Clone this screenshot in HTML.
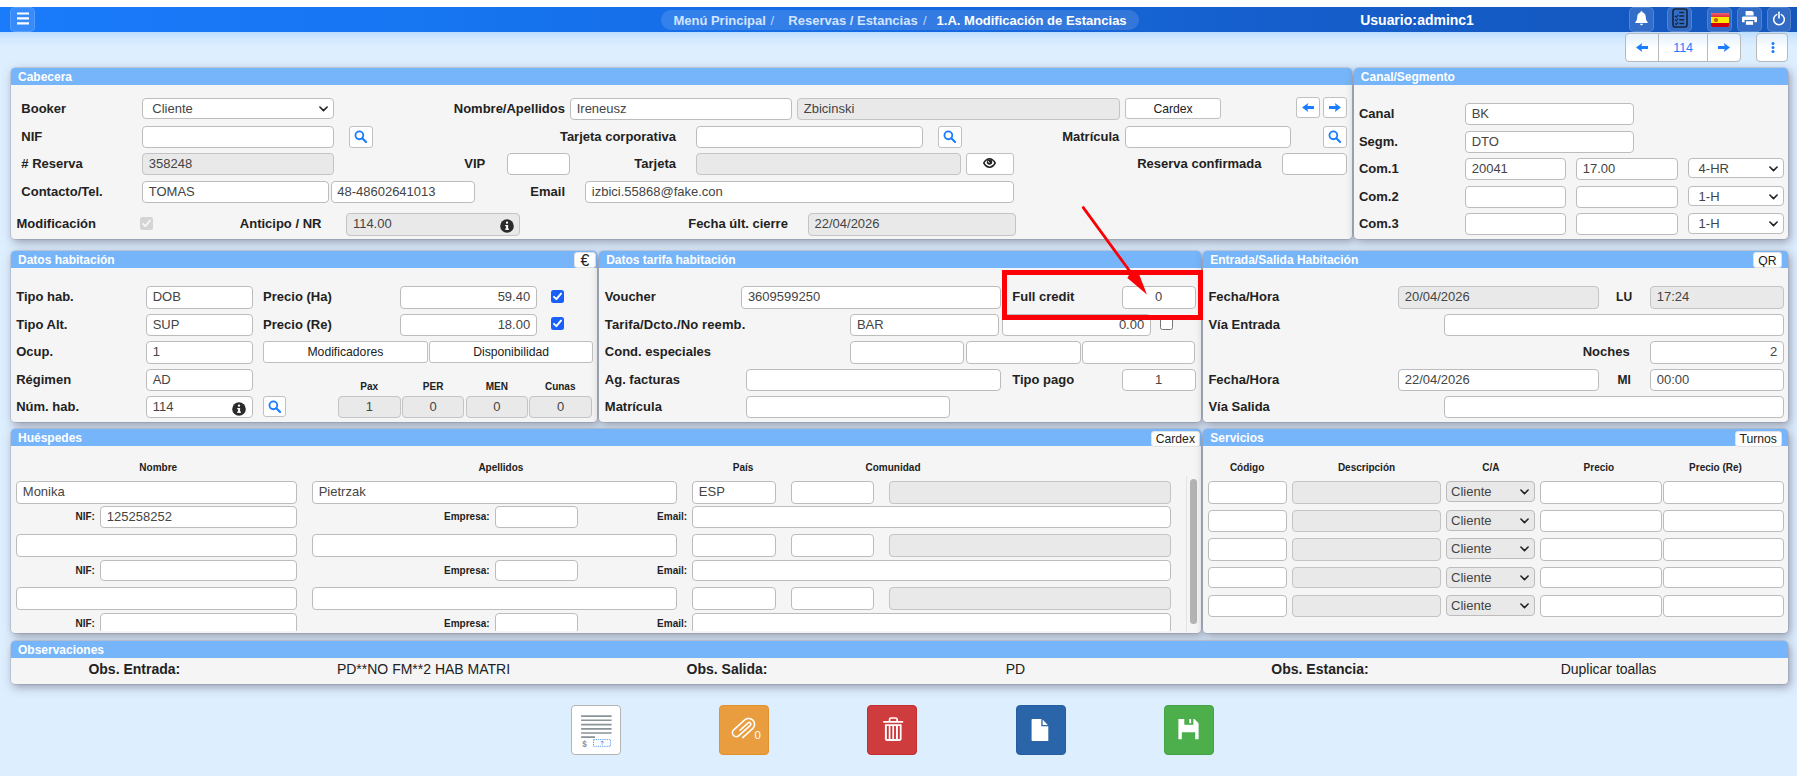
<!DOCTYPE html>
<html><head><meta charset="utf-8"><title>1.A. Modificación de Estancias</title>
<style>
html,body{margin:0;padding:0;}
body{width:1797px;height:776px;overflow:hidden;position:relative;background:#ddeeff;font-family:"Liberation Sans",sans-serif;font-size:13px;color:#222;}
div{position:absolute;box-sizing:border-box;}
.a{position:absolute;}
.p{background:#f5f5f5;border-radius:4px;box-shadow:0 0 0 0.5px rgba(90,90,120,.3),2px 3px 10px rgba(90,85,100,.56);}
.ph{left:0;top:0;right:0;background:#76b5f9;border-radius:4px 4px 0 0;color:#fff;font-weight:bold;font-size:12px;padding-left:7px;white-space:nowrap;overflow:hidden;}
.i{background:#fff;border:1px solid #bcbcbc;border-radius:4px;padding:0 5.5px;font-size:13px;color:#444;white-space:nowrap;overflow:hidden;}
.i.d{background:#e9e9e9;border-color:#c4c4c4;}
.i.g{background:#e9e9e9;}
.s .chev{position:absolute;right:4.5px;top:50%;margin-top:-2.6px;}
.b{background:#fff;border:1px solid #c0c0c0;border-radius:3px;font-size:12.2px;color:#222;text-align:center;white-space:nowrap;overflow:hidden;}
.l{white-space:nowrap;color:#222;}
.tb{border-radius:5px;background:rgba(255,255,255,.13);box-shadow:inset 0 0 0 1px rgba(255,255,255,.16);}
</style></head><body>

<div style="left:0;top:0;width:1797px;height:7px;background:#fff;"></div>
<div style="left:0;top:32px;width:1797px;height:15px;background:linear-gradient(#bbddff,#d3e9ff 50%,#ddeeff);"></div>
<div style="left:0;top:6.8px;width:1797px;height:25.2px;background:linear-gradient(90deg,#1a7bfb 0%,#1675f1 24%,#1569e0 50%,#155dc9 75%,#1456bc 100%);"></div>
<div class="tb" style="left:10px;top:7.3px;width:24.8px;height:24.3px;"><svg width="12" height="13" viewBox="0 0 12 13" style="position:absolute;left:6.6px;top:4.4px"><path d="M0 1.5H12M0 6.4H12M0 11.3H12" stroke="#fff" stroke-width="2.2"/></svg></div>
<div class="" style="left:661px;top:9.5px;width:478px;height:20.5px;border-radius:10.5px;background:rgba(255,255,255,.13);"></div>
<div class="l" style="top:11px;height:20px;line-height:20px;font-size:13px;font-weight:bold;color:#d3e4ff;left:673.4px;">Menú Principal</div>
<div class="l" style="top:11px;height:20px;line-height:20px;font-size:13px;font-weight:normal;color:#c0d6fa;left:770.5px;">/</div>
<div class="l" style="top:11px;height:20px;line-height:20px;font-size:13px;font-weight:bold;color:#d3e4ff;left:788.3px;">Reservas / Estancias</div>
<div class="l" style="top:11px;height:20px;line-height:20px;font-size:13px;font-weight:normal;color:#c0d6fa;left:923px;">/</div>
<div class="l" style="top:11px;height:20px;line-height:20px;font-size:13px;font-weight:bold;color:#fff;left:936.6px;">1.A. Modificación de Estancias</div>
<div class="l" style="top:10px;height:20px;line-height:20px;font-size:14px;font-weight:bold;color:#fff;left:1360.3px;word-spacing:-3.4px;letter-spacing:-0.04px;">Usuario: adminc1</div>
<div class="tb" style="left:1629.3px;top:7.3px;width:24.4px;height:24.3px;"><svg width="13" height="15" viewBox="0 0 13 15" style="position:absolute;left:5.7px;top:3.4px"><path d="M6.5 0.3 C7.2 0.3 7.6 0.8 7.6 1.4 C9.7 1.9 10.8 3.7 10.8 6 C10.8 8.6 11.4 9.9 12.6 10.9 C12.9 11.2 12.7 11.9 12.2 11.9 H0.8 C0.3 11.9 0.1 11.2 0.4 10.9 C1.6 9.9 2.2 8.6 2.2 6 C2.2 3.7 3.3 1.9 5.4 1.4 C5.4 0.8 5.8 0.3 6.5 0.3 Z" fill="#fff"/><path d="M5 12.8 H8 C8 13.7 7.3 14.3 6.5 14.3 C5.7 14.3 5 13.7 5 12.8Z" fill="#fff"/></svg></div>
<div class="tb" style="left:1667.3px;top:7.3px;width:24.3px;height:24.3px;"><svg width="16" height="20" viewBox="0 0 16 20" style="position:absolute;left:4.8px;top:0.9px"><rect x="1" y="1" width="14" height="18" rx="2.3" fill="none" stroke="#16253d" stroke-width="1.6"/><path d="M7.3 4.4H12.2M7.3 8.1H12.2M7.3 11.8H12.2M7.3 15.5H12.2" stroke="#16253d" stroke-width="1.5"/><path d="M3 8 L4.2 9.2 L6.2 6.8 M3 11.7 L4.2 12.9 L6.2 10.5 M3 15.4 L4.2 16.6 L6.2 14.2" fill="none" stroke="#16253d" stroke-width="1.1"/></svg></div>
<div class="tb" style="left:1707.3px;top:7.3px;width:24.3px;height:24.3px;"><div style="left:3.5px;top:5.7px;width:18.5px;height:14px;background:#ffe900;border-radius:1px;overflow:hidden;"><div style="left:0;top:0;width:100%;height:3.8px;background:linear-gradient(#ee6470,#dd2a3a);"></div><div style="left:0;bottom:0;width:100%;height:3.9px;background:#d1000f;"></div><div style="left:3.6px;top:4.6px;width:3.6px;height:4.6px;background:#c9621c;border-radius:1.5px;"></div></div></div>
<div class="tb" style="left:1737.3px;top:7.3px;width:24.3px;height:24.3px;"><svg width="15" height="14" viewBox="0 0 15 14" style="position:absolute;left:4.7px;top:4px"><path d="M3.6 0H10.2L11.6 1.4V4.6H3.6Z" fill="#fff"/><path d="M1.4 5.6H13.6C14.4 5.6 15 6.2 15 7V10.6C15 11 14.7 11.2 14.4 11.2H12.4V9H2.6V11.2H0.6C0.3 11.2 0 11 0 10.6V7C0 6.2 0.6 5.6 1.4 5.6Z" fill="#fff"/><rect x="3.9" y="10.2" width="7.2" height="3.6" fill="#fff"/></svg></div>
<div class="tb" style="left:1767.3px;top:7.3px;width:23.5px;height:24.3px;"><svg width="14" height="15" viewBox="0 0 14 15" style="position:absolute;left:4.9px;top:3.3px"><path d="M4.6 3.6 A5.3 5.3 0 1 0 9.4 3.6" fill="none" stroke="#fff" stroke-width="1.5" stroke-linecap="round"/><path d="M7 1.3V7" stroke="#fff" stroke-width="1.6" stroke-linecap="round"/></svg></div>
<div class="" style="left:1625.4px;top:33.4px;width:115.2px;height:29px;background:linear-gradient(#e2f0ff,#fff 55%);border:1px solid #b9b9b9;border-radius:4px;"></div>
<div class="" style="left:1658px;top:34px;width:1px;height:28px;background:#b9b9b9;"></div>
<div class="" style="left:1707px;top:34px;width:1px;height:28px;background:#b9b9b9;"></div>
<div class="" style="left:1625.4px;top:33px;width:33px;height:29px;"><svg width="12.1" height="9" viewBox="0 0 12.1 9" style="position:absolute;left:50%;top:50%;margin:-4.5px 0 0 -6.05px"><path d="M0 4.5 L6.3 0 L5.4 3.1 H12.1 V5.9 H5.4 L6.3 9 Z" fill="#1a7cff"/></svg></div>
<div class="" style="left:1707.5px;top:33px;width:33.1px;height:29px;"><svg width="12.1" height="9" viewBox="0 0 12.1 9" style="position:absolute;left:50%;top:50%;margin:-4.5px 0 0 -6.05px"><path d="M0 4.5 L6.3 0 L5.4 3.1 H12.1 V5.9 H5.4 L6.3 9 Z" fill="#1a7cff" transform="translate(12.1,0) scale(-1,1)"/></svg></div>
<div class="l" style="top:38px;height:20px;line-height:20px;font-size:12.5px;font-weight:normal;color:#1a7cff;left:1483.1px;width:400px;text-align:center;">114</div>
<div class="" style="left:1756.3px;top:33.4px;width:32.1px;height:29px;background:linear-gradient(#e2f0ff,#fff 55%);border:1px solid #b9b9b9;border-radius:4px;"><svg width="4" height="12" viewBox="0 0 4 12" style="position:absolute;left:13.5px;top:8px"><circle cx="2" cy="1.6" r="1.5" fill="#1a7cff"/><circle cx="2" cy="5.6" r="1.5" fill="#1a7cff"/><circle cx="2" cy="9.6" r="1.5" fill="#1a7cff"/></svg></div>
<div class="p" style="left:11px;top:68px;width:1341px;height:170.8px;"><div class="ph" style="height:17px;line-height:19px;">Cabecera</div></div>
<div class="l" style="top:99px;height:20px;line-height:20px;font-size:13px;font-weight:bold;left:21.3px;">Booker</div>
<div class="l" style="top:127px;height:20px;line-height:20px;font-size:13px;font-weight:bold;left:21.3px;">NIF</div>
<div class="l" style="top:154px;height:20px;line-height:20px;font-size:13px;font-weight:bold;left:21.3px;"># Reserva</div>
<div class="l" style="top:182px;height:20px;line-height:20px;font-size:13px;font-weight:bold;left:21.3px;">Contacto/Tel.</div>
<div class="l" style="top:214px;height:20px;line-height:20px;font-size:13px;font-weight:bold;left:16.5px;">Modificación</div>
<div class="i s" style="left:142.3px;top:98.4px;width:191.4px;height:20.3px;line-height:19.9px;padding-left:9px;">Cliente<svg class="chev" width="9" height="6" viewBox="0 0 9 6"><path d="M0.9 1 L4.5 4.6 L8.1 1" fill="none" stroke="#222" stroke-width="1.6" stroke-linecap="round" stroke-linejoin="round"/></svg></div>
<div class="i" style="left:142.3px;top:126.2px;width:191.4px;height:21.4px;line-height:19.4px;"></div>
<div class="b" style="left:349.2px;top:126.2px;width:23.7px;height:21.4px;line-height:20.4px;"><svg width="13.4" height="13.4" viewBox="0 0 14 14" style="position:absolute;left:50%;top:50%;margin:-6.9px 0 0 -6.7px"><circle cx="5.6" cy="5.6" r="4.1" fill="none" stroke="#1a7cff" stroke-width="1.9"/><path d="M8.7 8.7 L12.6 12.6" stroke="#1a7cff" stroke-width="2.2" stroke-linecap="round"/></svg></div>
<div class="i d" style="left:142.3px;top:153.4px;width:191.4px;height:22px;line-height:20px;">358248</div>
<div class="i" style="left:142.3px;top:181.3px;width:187.1px;height:21.3px;line-height:19.3px;">TOMAS</div>
<div class="i" style="left:330.7px;top:181.3px;width:144.1px;height:21.3px;line-height:19.3px;">48-48602641013</div>
<div class="a" style="left:140.3px;top:217px;width:13px;height:13px;background:#d4d4d4;border-radius:2.5px;"><svg width="13" height="13" viewBox="0 0 13 13"><path d="M3 6.8 L5.4 9.2 L10 3.6" fill="none" stroke="#f5f5f5" stroke-width="1.9" stroke-linecap="round" stroke-linejoin="round"/></svg></div>
<div class="l" style="top:214px;height:20px;line-height:20px;font-size:13px;font-weight:bold;right:1475.6px;text-align:right;">Anticipo / NR</div>
<div class="i d" style="left:346.4px;top:213.3px;width:173.4px;height:22.3px;line-height:20.3px;">114.00</div>
<div class="a" style="left:499.7px;top:218.8px;width:14px;height:14px;"><svg width="14" height="14" viewBox="0 0 14 14"><circle cx="7" cy="7" r="6.8" fill="#2b2b2b"/><rect x="6.1" y="6" width="2" height="4.6" fill="#fff"/><rect x="5.2" y="6" width="1.8" height="1.2" fill="#fff"/><rect x="5.1" y="9.6" width="3.9" height="1.2" fill="#fff"/><circle cx="7" cy="3.7" r="1.15" fill="#fff"/></svg></div>
<div class="l" style="top:99px;height:20px;line-height:20px;font-size:13px;font-weight:bold;right:1232px;text-align:right;">Nombre/Apellidos</div>
<div class="i" style="left:570.2px;top:98.4px;width:221.4px;height:22px;line-height:20px;">Ireneusz</div>
<div class="i d" style="left:797.3px;top:98.4px;width:322.4px;height:22px;line-height:20px;">Zbicinski</div>
<div class="b" style="left:1125.4px;top:98.4px;width:95.3px;height:21px;line-height:20px;">Cardex</div>
<div class="b" style="left:1296.3px;top:97.4px;width:23.4px;height:21.1px;line-height:20.1px;"><svg width="12.1" height="9" viewBox="0 0 12.1 9" style="position:absolute;left:50%;top:50%;margin:-4.5px 0 0 -6.05px"><path d="M0 4.5 L6.3 0 L5.4 3.1 H12.1 V5.9 H5.4 L6.3 9 Z" fill="#1a7cff"/></svg></div>
<div class="b" style="left:1323.3px;top:97.4px;width:23.4px;height:21.1px;line-height:20.1px;"><svg width="12.1" height="9" viewBox="0 0 12.1 9" style="position:absolute;left:50%;top:50%;margin:-4.5px 0 0 -6.05px"><path d="M0 4.5 L6.3 0 L5.4 3.1 H12.1 V5.9 H5.4 L6.3 9 Z" fill="#1a7cff" transform="translate(12.1,0) scale(-1,1)"/></svg></div>
<div class="l" style="top:127px;height:20px;line-height:20px;font-size:13px;font-weight:bold;right:1121px;text-align:right;">Tarjeta corporativa</div>
<div class="i" style="left:696.3px;top:126.2px;width:226.3px;height:21.4px;line-height:19.4px;"></div>
<div class="b" style="left:938.1px;top:126.2px;width:23.6px;height:21.4px;line-height:20.4px;"><svg width="13.4" height="13.4" viewBox="0 0 14 14" style="position:absolute;left:50%;top:50%;margin:-6.9px 0 0 -6.7px"><circle cx="5.6" cy="5.6" r="4.1" fill="none" stroke="#1a7cff" stroke-width="1.9"/><path d="M8.7 8.7 L12.6 12.6" stroke="#1a7cff" stroke-width="2.2" stroke-linecap="round"/></svg></div>
<div class="l" style="top:127px;height:20px;line-height:20px;font-size:13px;font-weight:bold;right:677.7px;text-align:right;">Matrícula</div>
<div class="i" style="left:1125.4px;top:126.2px;width:165.4px;height:21.4px;line-height:19.4px;"></div>
<div class="b" style="left:1323.3px;top:126.2px;width:23.4px;height:21.4px;line-height:20.4px;"><svg width="13.4" height="13.4" viewBox="0 0 14 14" style="position:absolute;left:50%;top:50%;margin:-6.9px 0 0 -6.7px"><circle cx="5.6" cy="5.6" r="4.1" fill="none" stroke="#1a7cff" stroke-width="1.9"/><path d="M8.7 8.7 L12.6 12.6" stroke="#1a7cff" stroke-width="2.2" stroke-linecap="round"/></svg></div>
<div class="l" style="top:154px;height:20px;line-height:20px;font-size:13px;font-weight:bold;right:1311.8px;text-align:right;">VIP</div>
<div class="i" style="left:507.3px;top:153.4px;width:62.4px;height:22px;line-height:20px;"></div>
<div class="l" style="top:154px;height:20px;line-height:20px;font-size:13px;font-weight:bold;right:1121px;text-align:right;">Tarjeta</div>
<div class="i d" style="left:696.3px;top:153.4px;width:264.4px;height:22px;line-height:20px;"></div>
<div class="b" style="left:966.4px;top:153.4px;width:47.5px;height:21.2px;line-height:20.2px;"><svg width="13" height="10" viewBox="0 0 13 10" style="position:absolute;left:50%;top:50%;margin:-5.6px 0 0 -6.7px"><path d="M0.8 5 C2.6 1.9 4.6 0.85 6.5 0.85 C8.4 0.85 10.4 1.9 12.2 5 C10.4 8.1 8.4 9.15 6.5 9.15 C4.6 9.15 2.6 8.1 0.8 5Z" fill="#fff" stroke="#222" stroke-width="1.5"/><circle cx="6.5" cy="3.9" r="2.75" fill="#222"/><path d="M5.2 3.2 L6.2 4.6" stroke="#fff" stroke-width="0.9" stroke-linecap="round"/></svg></div>
<div class="l" style="top:154px;height:20px;line-height:20px;font-size:13px;font-weight:bold;right:535.5px;text-align:right;">Reserva confirmada</div>
<div class="i" style="left:1282.4px;top:153.4px;width:64.3px;height:22px;line-height:20px;"></div>
<div class="l" style="top:182px;height:20px;line-height:20px;font-size:13px;font-weight:bold;right:1232px;text-align:right;">Email</div>
<div class="i" style="left:585.3px;top:181.3px;width:428.6px;height:21.3px;line-height:19.3px;">izbici.55868@fake.con</div>
<div class="l" style="top:214px;height:20px;line-height:20px;font-size:13px;font-weight:bold;right:1009.1px;text-align:right;">Fecha últ. cierre</div>
<div class="i d" style="left:808px;top:213.3px;width:207.8px;height:22.3px;line-height:20.3px;">22/04/2026</div>
<div class="p" style="left:1353.8px;top:68px;width:434.4px;height:170.8px;"><div class="ph" style="height:17px;line-height:19px;">Canal/Segmento</div></div>
<div class="l" style="top:104px;height:20px;line-height:20px;font-size:13px;font-weight:bold;left:1358.9px;">Canal</div>
<div class="l" style="top:132px;height:20px;line-height:20px;font-size:13px;font-weight:bold;left:1358.9px;">Segm.</div>
<div class="l" style="top:159px;height:20px;line-height:20px;font-size:13px;font-weight:bold;left:1358.9px;">Com.1</div>
<div class="l" style="top:187px;height:20px;line-height:20px;font-size:13px;font-weight:bold;left:1358.9px;">Com.2</div>
<div class="l" style="top:214px;height:20px;line-height:20px;font-size:13px;font-weight:bold;left:1358.9px;">Com.3</div>
<div class="i" style="left:1465.2px;top:103.1px;width:168.4px;height:22.2px;line-height:20.2px;">BK</div>
<div class="i" style="left:1465.2px;top:131.2px;width:168.4px;height:21.4px;line-height:19.4px;">DTO</div>
<div class="i" style="left:1465.2px;top:158.2px;width:100.8px;height:22.2px;line-height:20.2px;">20041</div>
<div class="i" style="left:1576.2px;top:158.2px;width:101.5px;height:22.2px;line-height:20.2px;">17.00</div>
<div class="i s" style="left:1688.1px;top:158.2px;width:95.8px;height:20.3px;line-height:19.9px;padding-left:9.5px;">4-HR<svg class="chev" width="9" height="6" viewBox="0 0 9 6"><path d="M0.9 1 L4.5 4.6 L8.1 1" fill="none" stroke="#222" stroke-width="1.6" stroke-linecap="round" stroke-linejoin="round"/></svg></div>
<div class="i" style="left:1465.2px;top:186.2px;width:100.8px;height:21.4px;line-height:19.4px;"></div>
<div class="i" style="left:1576.2px;top:186.2px;width:101.5px;height:21.4px;line-height:19.4px;"></div>
<div class="i s" style="left:1688.1px;top:186.2px;width:95.8px;height:20.3px;line-height:19.9px;padding-left:9.5px;">1-H<svg class="chev" width="9" height="6" viewBox="0 0 9 6"><path d="M0.9 1 L4.5 4.6 L8.1 1" fill="none" stroke="#222" stroke-width="1.6" stroke-linecap="round" stroke-linejoin="round"/></svg></div>
<div class="i" style="left:1465.2px;top:213.3px;width:100.8px;height:22.2px;line-height:20.2px;"></div>
<div class="i" style="left:1576.2px;top:213.3px;width:101.5px;height:22.2px;line-height:20.2px;"></div>
<div class="i s" style="left:1688.1px;top:213.3px;width:95.8px;height:20.3px;line-height:19.9px;padding-left:9.5px;">1-H<svg class="chev" width="9" height="6" viewBox="0 0 9 6"><path d="M0.9 1 L4.5 4.6 L8.1 1" fill="none" stroke="#222" stroke-width="1.6" stroke-linecap="round" stroke-linejoin="round"/></svg></div>
<div class="p" style="left:11px;top:251px;width:585.5px;height:170.8px;"><div class="ph" style="height:17px;line-height:19px;">Datos habitación</div></div>
<div class="b" style="left:573.8px;top:251.7px;width:22.4px;height:16.5px;border-radius:3px;border-color:#e2e2e2;font-size:16px;line-height:16px;">€</div>
<div class="l" style="top:287px;height:20px;line-height:20px;font-size:13px;font-weight:bold;left:16.2px;">Tipo hab.</div>
<div class="i" style="left:146.2px;top:286.3px;width:106.5px;height:22.3px;line-height:20.3px;">DOB</div>
<div class="l" style="top:315px;height:20px;line-height:20px;font-size:13px;font-weight:bold;left:16.2px;">Tipo Alt.</div>
<div class="i" style="left:146.2px;top:314.3px;width:106.5px;height:21.4px;line-height:19.4px;">SUP</div>
<div class="l" style="top:342px;height:20px;line-height:20px;font-size:13px;font-weight:bold;left:16.2px;">Ocup.</div>
<div class="i" style="left:146.2px;top:341.4px;width:106.5px;height:22.2px;line-height:20.2px;">1</div>
<div class="l" style="top:370px;height:20px;line-height:20px;font-size:13px;font-weight:bold;left:16.2px;">Régimen</div>
<div class="i" style="left:146.2px;top:369.3px;width:106.5px;height:21.4px;line-height:19.4px;">AD</div>
<div class="l" style="top:397px;height:20px;line-height:20px;font-size:13px;font-weight:bold;left:16.2px;">Núm. hab.</div>
<div class="i" style="left:146.2px;top:396.3px;width:106.5px;height:22.2px;line-height:20.2px;">114</div>
<div class="a" style="left:232.4px;top:402.1px;width:14px;height:14px;"><svg width="14" height="14" viewBox="0 0 14 14"><circle cx="7" cy="7" r="6.8" fill="#2b2b2b"/><rect x="6.1" y="6" width="2" height="4.6" fill="#fff"/><rect x="5.2" y="6" width="1.8" height="1.2" fill="#fff"/><rect x="5.1" y="9.6" width="3.9" height="1.2" fill="#fff"/><circle cx="7" cy="3.7" r="1.15" fill="#fff"/></svg></div>
<div class="l" style="top:287px;height:20px;line-height:20px;font-size:13px;font-weight:bold;left:263.1px;">Precio (Ha)</div>
<div class="l" style="top:315px;height:20px;line-height:20px;font-size:13px;font-weight:bold;left:263.1px;">Precio (Re)</div>
<div class="i" style="left:400.2px;top:286.3px;width:136.5px;height:22.3px;text-align:right;line-height:20.3px;">59.40</div>
<div class="i" style="left:400.2px;top:314.3px;width:136.5px;height:21.4px;text-align:right;line-height:19.4px;">18.00</div>
<div class="a" style="left:551.1px;top:290.2px;width:13px;height:13px;background:#1b5ffb;border-radius:2.5px;"><svg width="13" height="13" viewBox="0 0 13 13"><path d="M3 6.8 L5.4 9.2 L10 3.6" fill="none" stroke="#fff" stroke-width="1.9" stroke-linecap="round" stroke-linejoin="round"/></svg></div>
<div class="a" style="left:551.1px;top:316.9px;width:13px;height:13px;background:#1b5ffb;border-radius:2.5px;"><svg width="13" height="13" viewBox="0 0 13 13"><path d="M3 6.8 L5.4 9.2 L10 3.6" fill="none" stroke="#fff" stroke-width="1.9" stroke-linecap="round" stroke-linejoin="round"/></svg></div>
<div class="b" style="left:263.1px;top:341.4px;width:164.6px;height:21.2px;line-height:20.2px;">Modificadores</div>
<div class="b" style="left:429.3px;top:341.4px;width:163.7px;height:21.2px;line-height:20.2px;">Disponibilidad</div>
<div class="b" style="left:263.3px;top:396.4px;width:23.2px;height:20.9px;line-height:19.9px;"><svg width="13.4" height="13.4" viewBox="0 0 14 14" style="position:absolute;left:50%;top:50%;margin:-6.9px 0 0 -6.7px"><circle cx="5.6" cy="5.6" r="4.1" fill="none" stroke="#1a7cff" stroke-width="1.9"/><path d="M8.7 8.7 L12.6 12.6" stroke="#1a7cff" stroke-width="2.2" stroke-linecap="round"/></svg></div>
<div class="l" style="top:377px;height:20px;line-height:20px;font-size:10px;font-weight:bold;left:169.2px;width:400px;text-align:center;">Pax</div>
<div class="l" style="top:377px;height:20px;line-height:20px;font-size:10px;font-weight:bold;left:233.1px;width:400px;text-align:center;">PER</div>
<div class="l" style="top:377px;height:20px;line-height:20px;font-size:10px;font-weight:bold;left:296.8px;width:400px;text-align:center;">MEN</div>
<div class="l" style="top:377px;height:20px;line-height:20px;font-size:10px;font-weight:bold;left:360.2px;width:400px;text-align:center;">Cunas</div>
<div class="i d" style="left:338.2px;top:396.4px;width:62.6px;height:22px;text-align:center;line-height:20px;">1</div>
<div class="i d" style="left:401.6px;top:396.4px;width:62.9px;height:22px;text-align:center;line-height:20px;">0</div>
<div class="i d" style="left:465.5px;top:396.4px;width:62.9px;height:22px;text-align:center;line-height:20px;">0</div>
<div class="i d" style="left:529.4px;top:396.4px;width:62.6px;height:22px;text-align:center;line-height:20px;">0</div>
<div class="p" style="left:599.2px;top:251px;width:601.8px;height:170.8px;"><div class="ph" style="height:17px;line-height:19px;">Datos tarifa habitación</div></div>
<div class="l" style="top:287px;height:20px;line-height:20px;font-size:13px;font-weight:bold;left:604.8px;">Voucher</div>
<div class="l" style="top:315px;height:20px;line-height:20px;font-size:13px;font-weight:bold;left:604.8px;letter-spacing:.13px;">Tarifa/Dcto./No reemb.</div>
<div class="l" style="top:342px;height:20px;line-height:20px;font-size:13px;font-weight:bold;left:604.8px;">Cond. especiales</div>
<div class="l" style="top:370px;height:20px;line-height:20px;font-size:13px;font-weight:bold;left:604.8px;">Ag. facturas</div>
<div class="l" style="top:397px;height:20px;line-height:20px;font-size:13px;font-weight:bold;left:604.8px;">Matrícula</div>
<div class="i" style="left:741.4px;top:286.3px;width:259.7px;height:22.3px;line-height:20.3px;">3609599250</div>
<div class="l" style="top:287px;height:20px;line-height:20px;font-size:13px;font-weight:bold;left:1012.3px;">Full credit</div>
<div class="i" style="left:1121.5px;top:286.3px;width:74px;height:22.3px;text-align:center;line-height:20.3px;">0</div>
<div class="i" style="left:850.4px;top:314.3px;width:148.4px;height:21.4px;line-height:19.4px;">BAR</div>
<div class="i" style="left:1001.5px;top:314.3px;width:149.2px;height:21.4px;text-align:right;line-height:19.4px;">0.00</div>
<div class="a" style="left:1160.1px;top:316.7px;width:13px;height:13px;background:#fff;border:1px solid #767676;border-radius:2.5px;box-sizing:border-box;"></div>
<div class="i" style="left:850.4px;top:341.4px;width:113.8px;height:22.2px;line-height:20.2px;"></div>
<div class="i" style="left:965.8px;top:341.4px;width:114.8px;height:22.2px;line-height:20.2px;"></div>
<div class="i" style="left:1081.6px;top:341.4px;width:113.9px;height:22.2px;line-height:20.2px;"></div>
<div class="i" style="left:746.2px;top:369.3px;width:254.9px;height:21.4px;line-height:19.4px;"></div>
<div class="l" style="top:370px;height:20px;line-height:20px;font-size:13px;font-weight:bold;left:1012.3px;">Tipo pago</div>
<div class="i" style="left:1121.5px;top:369.3px;width:74px;height:21.4px;text-align:center;line-height:19.4px;">1</div>
<div class="i" style="left:746.2px;top:396.3px;width:203.4px;height:22.2px;line-height:20.2px;"></div>
<div class="p" style="left:1203.2px;top:251px;width:585px;height:170.8px;"><div class="ph" style="height:17px;line-height:19px;">Entrada/Salida Habitación</div></div>
<div class="b" style="left:1753.3px;top:251.7px;width:28.3px;height:16.5px;border-radius:3px;border-color:#e2e2e2;font-size:12.2px;line-height:16px;">QR</div>
<div class="l" style="top:287px;height:20px;line-height:20px;font-size:13px;font-weight:bold;left:1208.4px;">Fecha/Hora</div>
<div class="l" style="top:315px;height:20px;line-height:20px;font-size:13px;font-weight:bold;left:1208.4px;">Vía Entrada</div>
<div class="l" style="top:370px;height:20px;line-height:20px;font-size:13px;font-weight:bold;left:1208.4px;">Fecha/Hora</div>
<div class="l" style="top:397px;height:20px;line-height:20px;font-size:13px;font-weight:bold;left:1208.4px;">Vía Salida</div>
<div class="i d" style="left:1398.2px;top:286.3px;width:200.5px;height:22.3px;line-height:20.3px;">20/04/2026</div>
<div class="l" style="top:287px;height:20px;line-height:20px;font-size:12px;font-weight:bold;left:1424.1px;width:400px;text-align:center;">LU</div>
<div class="i d" style="left:1650.3px;top:286.3px;width:133.4px;height:22.3px;line-height:20.3px;">17:24</div>
<div class="i" style="left:1444.4px;top:314.3px;width:339.3px;height:21.4px;line-height:19.4px;"></div>
<div class="l" style="top:342px;height:20px;line-height:20px;font-size:13px;font-weight:bold;right:167.3px;text-align:right;">Noches</div>
<div class="i" style="left:1650.3px;top:341.4px;width:133.4px;height:22.2px;text-align:right;line-height:20.2px;">2</div>
<div class="i" style="left:1398.2px;top:369.3px;width:200.5px;height:21.4px;line-height:19.4px;">22/04/2026</div>
<div class="l" style="top:370px;height:20px;line-height:20px;font-size:12px;font-weight:bold;left:1424.1px;width:400px;text-align:center;">MI</div>
<div class="i" style="left:1650.3px;top:369.3px;width:133.4px;height:21.4px;line-height:19.4px;">00:00</div>
<div class="i" style="left:1444.4px;top:396.3px;width:339.3px;height:22.2px;line-height:20.2px;"></div>
<div class="p" style="left:11px;top:429.2px;width:1189.8px;height:204.3px;"><div class="ph" style="height:17px;line-height:19px;">Huéspedes</div></div>
<div class="b" style="left:1150.5px;top:431px;width:49.7px;height:16px;border-radius:3px;border-color:#e2e2e2;font-size:12.2px;line-height:15px;">Cardex</div>
<div class="l" style="top:458px;height:20px;line-height:20px;font-size:10px;font-weight:bold;left:-41.8px;width:400px;text-align:center;">Nombre</div>
<div class="l" style="top:458px;height:20px;line-height:20px;font-size:10px;font-weight:bold;left:300.9px;width:400px;text-align:center;">Apellidos</div>
<div class="l" style="top:458px;height:20px;line-height:20px;font-size:10px;font-weight:bold;left:543.1px;width:400px;text-align:center;">País</div>
<div class="l" style="top:458px;height:20px;line-height:20px;font-size:10px;font-weight:bold;left:693px;width:400px;text-align:center;">Comunidad</div>
<div style="left:11px;top:447px;width:1190px;height:184.3px;overflow:hidden;">
<div class="i" style="left:5.3px;top:34.2px;width:280.6px;height:22.5px;line-height:20.5px;">Monika</div>
<div class="i" style="left:301.2px;top:34.2px;width:364.7px;height:22.5px;line-height:20.5px;">Pietrzak</div>
<div class="i" style="left:681.3px;top:34.2px;width:83.4px;height:22.5px;line-height:20.5px;">ESP</div>
<div class="i" style="left:780.2px;top:34.2px;width:82.7px;height:22.5px;line-height:20.5px;"></div>
<div class="i d" style="left:878.1px;top:34.2px;width:281.7px;height:22.5px;line-height:20.5px;"></div>
<div class="i" style="left:89.3px;top:59.3px;width:196.6px;height:21.4px;line-height:19.4px;">125258252</div>
<div class="i" style="left:484.3px;top:59.3px;width:82.4px;height:21.4px;line-height:19.4px;"></div>
<div class="i" style="left:681.3px;top:59.3px;width:478.5px;height:21.4px;line-height:19.4px;"></div>
<div class="l" style="right:1106.1px;top:60px;height:20px;line-height:20px;font-size:10px;font-weight:bold;text-align:right;">NIF:</div>
<div class="l" style="right:711.4px;top:60px;height:20px;line-height:20px;font-size:10px;font-weight:bold;text-align:right;">Empresa:</div>
<div class="l" style="right:513.9px;top:60px;height:20px;line-height:20px;font-size:10px;font-weight:bold;text-align:right;">Email:</div>
<div class="i" style="left:5.3px;top:87.4px;width:280.6px;height:22.2px;line-height:20.2px;"></div>
<div class="i" style="left:301.2px;top:87.4px;width:364.7px;height:22.2px;line-height:20.2px;"></div>
<div class="i" style="left:681.3px;top:87.4px;width:83.4px;height:22.2px;line-height:20.2px;"></div>
<div class="i" style="left:780.2px;top:87.4px;width:82.7px;height:22.2px;line-height:20.2px;"></div>
<div class="i d" style="left:878.1px;top:87.4px;width:281.7px;height:22.2px;line-height:20.2px;"></div>
<div class="i" style="left:89.3px;top:112.6px;width:196.6px;height:21.2px;line-height:19.2px;"></div>
<div class="i" style="left:484.3px;top:112.6px;width:82.4px;height:21.2px;line-height:19.2px;"></div>
<div class="i" style="left:681.3px;top:112.6px;width:478.5px;height:21.2px;line-height:19.2px;"></div>
<div class="l" style="right:1106.1px;top:114px;height:20px;line-height:20px;font-size:10px;font-weight:bold;text-align:right;">NIF:</div>
<div class="l" style="right:711.4px;top:114px;height:20px;line-height:20px;font-size:10px;font-weight:bold;text-align:right;">Empresa:</div>
<div class="l" style="right:513.9px;top:114px;height:20px;line-height:20px;font-size:10px;font-weight:bold;text-align:right;">Email:</div>
<div class="i" style="left:5.3px;top:140.4px;width:280.6px;height:22.2px;line-height:20.2px;"></div>
<div class="i" style="left:301.2px;top:140.4px;width:364.7px;height:22.2px;line-height:20.2px;"></div>
<div class="i" style="left:681.3px;top:140.4px;width:83.4px;height:22.2px;line-height:20.2px;"></div>
<div class="i" style="left:780.2px;top:140.4px;width:82.7px;height:22.2px;line-height:20.2px;"></div>
<div class="i d" style="left:878.1px;top:140.4px;width:281.7px;height:22.2px;line-height:20.2px;"></div>
<div class="i" style="left:89.3px;top:165.6px;width:196.6px;height:21.4px;line-height:19.4px;"></div>
<div class="i" style="left:484.3px;top:165.6px;width:82.4px;height:21.4px;line-height:19.4px;"></div>
<div class="i" style="left:681.3px;top:165.6px;width:478.5px;height:21.4px;line-height:19.4px;"></div>
<div class="l" style="right:1106.1px;top:167px;height:20px;line-height:20px;font-size:10px;font-weight:bold;text-align:right;">NIF:</div>
<div class="l" style="right:711.4px;top:167px;height:20px;line-height:20px;font-size:10px;font-weight:bold;text-align:right;">Empresa:</div>
<div class="l" style="right:513.9px;top:167px;height:20px;line-height:20px;font-size:10px;font-weight:bold;text-align:right;">Email:</div>
</div>
<div class="" style="left:1186.3px;top:475.5px;width:1px;height:156.5px;background:#e4e4e4;"></div>
<div class="" style="left:1190.4px;top:478.5px;width:7.1px;height:145.8px;background:#b3b3b3;border-radius:3.5px;"></div>
<div class="p" style="left:1203.3px;top:429.2px;width:584.9px;height:204.3px;"><div class="ph" style="height:17px;line-height:19px;">Servicios</div></div>
<div class="b" style="left:1734.7px;top:431px;width:46.9px;height:16.2px;border-radius:3px;border-color:#e2e2e2;font-size:12.2px;line-height:15px;">Turnos</div>
<div class="l" style="top:458px;height:20px;line-height:20px;font-size:10px;font-weight:bold;left:1047.1px;width:400px;text-align:center;">Código</div>
<div class="l" style="top:458px;height:20px;line-height:20px;font-size:10px;font-weight:bold;left:1166.5px;width:400px;text-align:center;">Descripción</div>
<div class="l" style="top:458px;height:20px;line-height:20px;font-size:10px;font-weight:bold;left:1290.8px;width:400px;text-align:center;">C/A</div>
<div class="l" style="top:458px;height:20px;line-height:20px;font-size:10px;font-weight:bold;left:1398.9px;width:400px;text-align:center;">Precio</div>
<div class="l" style="top:458px;height:20px;line-height:20px;font-size:10px;font-weight:bold;left:1515.5px;width:400px;text-align:center;">Precio (Re)</div>
<div class="i" style="left:1208.3px;top:481.2px;width:78.5px;height:22.5px;line-height:20.5px;"></div>
<div class="i d" style="left:1292.2px;top:481.2px;width:148.6px;height:22.5px;line-height:20.5px;"></div>
<div class="i s g" style="left:1446.1px;top:481.2px;width:88.6px;height:20.5px;line-height:20.1px;padding-left:4px;">Cliente<svg class="chev" width="9" height="6" viewBox="0 0 9 6"><path d="M0.9 1 L4.5 4.6 L8.1 1" fill="none" stroke="#222" stroke-width="1.6" stroke-linecap="round" stroke-linejoin="round"/></svg></div>
<div class="i" style="left:1540.4px;top:481.2px;width:121.2px;height:22.5px;line-height:20.5px;"></div>
<div class="i" style="left:1662.6px;top:481.2px;width:121.2px;height:22.5px;line-height:20.5px;"></div>
<div class="i" style="left:1208.3px;top:510.3px;width:78.5px;height:21.3px;line-height:19.3px;"></div>
<div class="i d" style="left:1292.2px;top:510.3px;width:148.6px;height:21.3px;line-height:19.3px;"></div>
<div class="i s g" style="left:1446.1px;top:510.3px;width:88.6px;height:20.5px;line-height:20.1px;padding-left:4px;">Cliente<svg class="chev" width="9" height="6" viewBox="0 0 9 6"><path d="M0.9 1 L4.5 4.6 L8.1 1" fill="none" stroke="#222" stroke-width="1.6" stroke-linecap="round" stroke-linejoin="round"/></svg></div>
<div class="i" style="left:1540.4px;top:510.3px;width:121.2px;height:21.3px;line-height:19.3px;"></div>
<div class="i" style="left:1662.6px;top:510.3px;width:121.2px;height:21.3px;line-height:19.3px;"></div>
<div class="i" style="left:1208.3px;top:538.3px;width:78.5px;height:22.4px;line-height:20.4px;"></div>
<div class="i d" style="left:1292.2px;top:538.3px;width:148.6px;height:22.4px;line-height:20.4px;"></div>
<div class="i s g" style="left:1446.1px;top:538.3px;width:88.6px;height:20.5px;line-height:20.1px;padding-left:4px;">Cliente<svg class="chev" width="9" height="6" viewBox="0 0 9 6"><path d="M0.9 1 L4.5 4.6 L8.1 1" fill="none" stroke="#222" stroke-width="1.6" stroke-linecap="round" stroke-linejoin="round"/></svg></div>
<div class="i" style="left:1540.4px;top:538.3px;width:121.2px;height:22.4px;line-height:20.4px;"></div>
<div class="i" style="left:1662.6px;top:538.3px;width:121.2px;height:22.4px;line-height:20.4px;"></div>
<div class="i" style="left:1208.3px;top:567.1px;width:78.5px;height:21.3px;line-height:19.3px;"></div>
<div class="i d" style="left:1292.2px;top:567.1px;width:148.6px;height:21.3px;line-height:19.3px;"></div>
<div class="i s g" style="left:1446.1px;top:567.1px;width:88.6px;height:20.5px;line-height:20.1px;padding-left:4px;">Cliente<svg class="chev" width="9" height="6" viewBox="0 0 9 6"><path d="M0.9 1 L4.5 4.6 L8.1 1" fill="none" stroke="#222" stroke-width="1.6" stroke-linecap="round" stroke-linejoin="round"/></svg></div>
<div class="i" style="left:1540.4px;top:567.1px;width:121.2px;height:21.3px;line-height:19.3px;"></div>
<div class="i" style="left:1662.6px;top:567.1px;width:121.2px;height:21.3px;line-height:19.3px;"></div>
<div class="i" style="left:1208.3px;top:595.1px;width:78.5px;height:22.4px;line-height:20.4px;"></div>
<div class="i d" style="left:1292.2px;top:595.1px;width:148.6px;height:22.4px;line-height:20.4px;"></div>
<div class="i s g" style="left:1446.1px;top:595.1px;width:88.6px;height:20.5px;line-height:20.1px;padding-left:4px;">Cliente<svg class="chev" width="9" height="6" viewBox="0 0 9 6"><path d="M0.9 1 L4.5 4.6 L8.1 1" fill="none" stroke="#222" stroke-width="1.6" stroke-linecap="round" stroke-linejoin="round"/></svg></div>
<div class="i" style="left:1540.4px;top:595.1px;width:121.2px;height:22.4px;line-height:20.4px;"></div>
<div class="i" style="left:1662.6px;top:595.1px;width:121.2px;height:22.4px;line-height:20.4px;"></div>
<div class="p" style="left:11px;top:641.1px;width:1777.2px;height:42.9px;"><div class="ph" style="height:17px;line-height:19px;">Observaciones</div></div>
<div class="l" style="top:659px;height:20px;line-height:20px;font-size:14px;font-weight:bold;left:-65.7px;width:400px;text-align:center;">Obs. Entrada:</div>
<div class="l" style="top:659px;height:20px;line-height:20px;font-size:14px;font-weight:normal;left:223.5px;width:400px;text-align:center;">PD**NO FM**2 HAB MATRI</div>
<div class="l" style="top:659px;height:20px;line-height:20px;font-size:14px;font-weight:bold;left:527px;width:400px;text-align:center;">Obs. Salida:</div>
<div class="l" style="top:659px;height:20px;line-height:20px;font-size:14px;font-weight:normal;left:815.5px;width:400px;text-align:center;">PD</div>
<div class="l" style="top:659px;height:20px;line-height:20px;font-size:14px;font-weight:bold;left:1120px;width:400px;text-align:center;">Obs. Estancia:</div>
<div class="l" style="top:659px;height:20px;line-height:20px;font-size:14px;font-weight:normal;left:1408.5px;width:400px;text-align:center;">Duplicar toallas</div>
<div class="" style="left:571.2px;top:705px;width:49.7px;height:49.9px;background:#fff;border:1px solid #b4b4b4;border-radius:4px;"><svg width="50" height="50" viewBox="0 0 50 50" style="position:absolute;left:-1px;top:-1px"><path d="M10.1 11.1H40.6M10.1 15.25H40.6M10.1 19.55H40.6M10.1 23.8H40.6M10.1 28H40.6M10.1 32.2H24.1" stroke="#8a9498" stroke-width="1.7"/><text x="11.2" y="42" font-family="Liberation Sans" font-weight="bold" font-size="8.2" fill="#8a9498">$</text><rect x="22.5" y="34.6" width="17" height="6.7" fill="#fff" stroke="#3b8ae6" stroke-width="0.8" stroke-dasharray="1.3 0.9"/><text x="29.3" y="40.2" font-family="Liberation Sans" font-weight="bold" font-size="5.6" fill="#3b8ae6">?</text></svg></div>
<div class="" style="left:719.1px;top:705px;width:49.9px;height:49.9px;background:#e99d3e;border:1px solid #e3922f;border-radius:4px;"><svg width="50" height="50" viewBox="0 0 50 50" style="position:absolute;left:-1px;top:-1px"><g transform="translate(24.9,23.6) rotate(-42)" fill="none" stroke="#fff" stroke-width="1.6" stroke-linecap="round"><path d="M-6.86 5.88 L6.43 5.88 A5.875 5.875 0 0 0 6.43 -5.87 L-8.43 -5.87 A3.87 3.87 0 0 0 -8.43 1.87 L6.98 1.87 A1.62 1.62 0 0 0 6.98 -1.37 L-4.07 -1.37"/></g><text x="35.4" y="33.7" font-family="Liberation Sans" font-size="11.5" fill="#fff">0</text></svg></div>
<div class="" style="left:867.2px;top:705px;width:49.9px;height:49.9px;background:#ce3c3d;border:1px solid #c52f30;border-radius:4px;"><svg width="50" height="50" viewBox="0 0 50 50" style="position:absolute;left:-1px;top:-1px"><path d="M16.9 16.85H35.4" stroke="#fff" stroke-width="1.9" stroke-linecap="round"/><path d="M22.55 16.4V14.6C22.55 13.6 23.2 13 24.2 13H28.5C29.5 13 30.15 13.6 30.15 14.6V16.4" fill="none" stroke="#fff" stroke-width="1.7"/><path d="M17.9 19.2H34.6V33.7C34.6 35 33.7 35.9 32.4 35.9H20.1C18.8 35.9 17.9 35 17.9 33.7Z" fill="#fff"/><path d="M20.8 21V34M24.4 21V34M28 21V34M31.85 21V34" stroke="#cb3233" stroke-width="1.85"/></svg></div>
<div class="" style="left:1015.8px;top:705px;width:50px;height:49.9px;background:#2a64a9;border:1px solid #255d9f;border-radius:4px;"><svg width="50" height="50" viewBox="0 0 50 50" style="position:absolute;left:-1px;top:-1px"><path d="M16.4 14H25.3V21.3H32.3V36H16.4C15.9 36 15.6 35.7 15.6 35.2V14.8C15.6 14.3 15.9 14 16.4 14Z" fill="#fff"/><path d="M26.6 14.6L31.8 20H26.6Z" fill="#fff"/></svg></div>
<div class="" style="left:1164px;top:705px;width:50px;height:49.9px;background:#4dae4c;border:1px solid #45a344;border-radius:4px;"><svg width="50" height="50" viewBox="0 0 50 50" style="position:absolute;left:-1px;top:-1px"><path d="M14.4 14H30.4L34.6 18.2V34.2H31.2V27.2H17.8V34.2H14.4Z" fill="#fff"/><path d="M20.3 13.9H29.4V19.8H20.3Z" fill="#4dae4c"/><rect x="25.3" y="14" width="1.8" height="4.2" fill="#fff"/></svg></div>
<div class="" style="left:1001.5px;top:270.3px;width:201.6px;height:49.3px;border:5.3px solid #fb0007;"></div>
<svg class="a" width="1797" height="776" viewBox="0 0 1797 776" style="left:0;top:0;pointer-events:none"><path d="M1083.3 207.6 L1134 277" stroke="#fb0007" stroke-width="2.8" stroke-linecap="round"/><path d="M1146.9 294.6 L1127.4 277.9 L1131.5 270.6 L1138.8 273.6 Z" fill="#fb0007"/></svg>
</body></html>
